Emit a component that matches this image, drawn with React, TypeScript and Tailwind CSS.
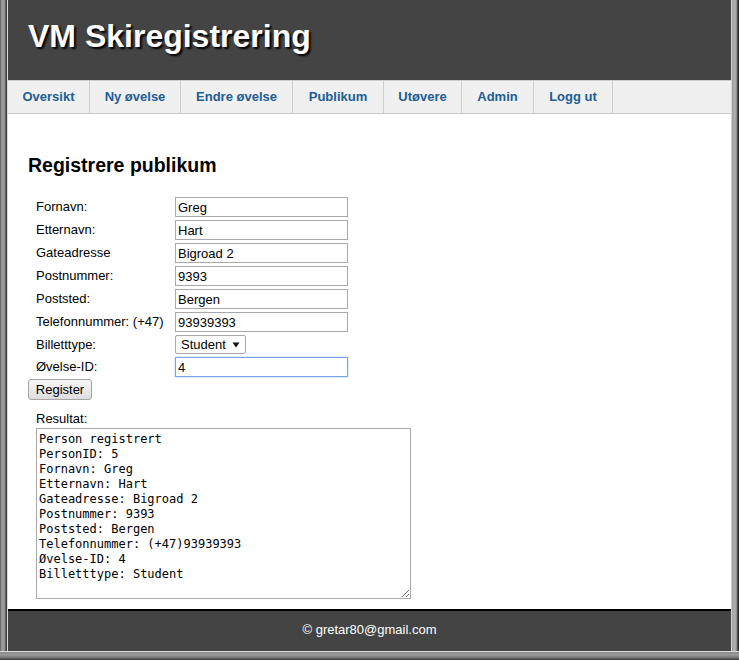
import React from "react";

const navItems: { label: string; w: string }[] = [
  { label: "Oversikt", w: "w-[82px]" },
  { label: "Ny øvelse", w: "w-[91px]" },
  { label: "Endre øvelse", w: "w-[112px]" },
  { label: "Publikum", w: "w-[91px]" },
  { label: "Utøvere", w: "w-[78px]" },
  { label: "Admin", w: "w-[72px]" },
  { label: "Logg ut", w: "w-[79px]" },
];

const result = [
  "Person registrert",
  "PersonID: 5",
  "Fornavn: Greg",
  "Etternavn: Hart",
  "Gateadresse: Bigroad 2",
  "Postnummer: 9393",
  "Poststed: Bergen",
  "Telefonnummer: (+47)93939393",
  "Øvelse-ID: 4",
  "Billetttype: Student",
].join("\n");

function Label({ children }: { children: React.ReactNode }) {
  return <div className="pt-[2px] text-[13px] leading-[15px] text-black">{children}</div>;
}

function TextInput({ value }: { value: string }) {
  return (
    <input
      readOnly
      defaultValue={value}
      className="h-[20px] w-[173px] border border-[#a9a9a9] bg-white px-[2px] text-[13px] leading-[15px] text-black outline-none"
    />
  );
}

export default function App() {
  return (
    <div className="flex h-[660px] w-[739px] flex-col bg-[#6b6b6b] font-['Liberation_Sans',Arial,sans-serif]">
      <div className="flex min-h-0 flex-1">
        {/* left window frame */}
        <div className="w-[8px] bg-[linear-gradient(to_right,#5a5a5a_0px,#a4a4a4_2px,#8e8e8e_5px,#3c3c3c_6px,#3c3c3c_7px,#dcdcdc_7px)]" />
        {/* page column */}
        <div className="flex w-[723px] flex-col">
          <header className="h-[80px] bg-[#444444] pl-[20px] pt-[18px]">
            <h1 className="text-[32px] font-bold leading-[37px] text-white [text-shadow:2px_2px_2px_#000]">
              VM Skiregistrering
            </h1>
          </header>
          <nav className="flex h-[34px] border-y border-[#cccccc] bg-[#f0f0f0]">
            {navItems.map((item) => (
              <div
                key={item.label}
                className={`${item.w} flex items-center justify-center border-r border-[#cccccc] text-[13px] font-bold text-[#215d96]`}
              >
                {item.label}
              </div>
            ))}
          </nav>
          <main className="flex-1 bg-white pl-[20px] pt-[40px]">
            <h2 className="text-[19.5px] font-bold leading-[23px] text-black">Registrere publikum</h2>
            <div className="mt-[20px] grid grid-cols-[139px_173px] gap-y-[3px] pl-[8px]">
              <Label>Fornavn:</Label>
              <TextInput value="Greg" />
              <Label>Etternavn:</Label>
              <TextInput value="Hart" />
              <Label>Gateadresse</Label>
              <TextInput value="Bigroad 2" />
              <Label>Postnummer:</Label>
              <TextInput value="9393" />
              <Label>Poststed:</Label>
              <TextInput value="Bergen" />
              <Label>Telefonnummer: (+47)</Label>
              <TextInput value="93939393" />
              <Label>Billetttype:</Label>
              <div className="flex h-[19px] w-[71px] items-center rounded-[2px] border border-[#a9a9a9] bg-white pl-[5px] pr-[5px] text-[13px] leading-[15px] text-black">
                <span className="flex-1">Student</span>
                <svg width="8" height="6" viewBox="0 0 8 6" className="mt-[1px]">
                  <polygon points="0.5,0.5 7.5,0.5 4,5.5" fill="#111" />
                </svg>
              </div>
              <Label>Øvelse-ID:</Label>
              <input
                readOnly
                defaultValue="4"
                className="h-[20px] w-[173px] border border-[#79a4e6] bg-white px-[2px] text-[13px] leading-[15px] text-black shadow-[0_0_2px_#a8c6f2] outline-none"
              />
            </div>
            <button className="mt-[2px] flex h-[21px] w-[64px] items-center justify-center rounded-[3px] border border-[#a6a6a6] bg-[linear-gradient(to_bottom,#f6f6f6,#dddddd)] text-[13px] leading-[15px] text-black">
              Register
            </button>
            <div className="mt-[11px] pl-[8px] text-[13px] leading-[15px] text-black">Resultat:</div>
            <div className="pl-[8px] pt-[2px]">
              <textarea
                readOnly
                defaultValue={result}
                className="block h-[171px] w-[375px] border border-[#a9a9a9] bg-white px-[2px] pt-[3px] font-['DejaVu_Sans_Mono',monospace] text-[12px] leading-[15px] text-black outline-none"
              />
            </div>
          </main>
          <footer className="h-[42px] border-t-2 border-black bg-[#444444] pt-[11px] text-center text-[13px] leading-[15px] text-white">
            © gretar80@gmail.com
          </footer>
        </div>
        {/* right window frame */}
        <div className="w-[8px] bg-[linear-gradient(to_right,#d4d4d4_0px,#d4d4d4_1px,#9c9c9c_1px,#b4b4b4_4px,#808080_6px,#2a2a2a_7px)]" />
      </div>
      {/* bottom window frame */}
      <div className="h-[9px] bg-[linear-gradient(to_bottom,#dcdcdc_0px,#dcdcdc_1px,#8a8a8a_1px,#9a9a9a_4px,#6e6e6e_7px,#333333_9px)]" />
    </div>
  );
}
